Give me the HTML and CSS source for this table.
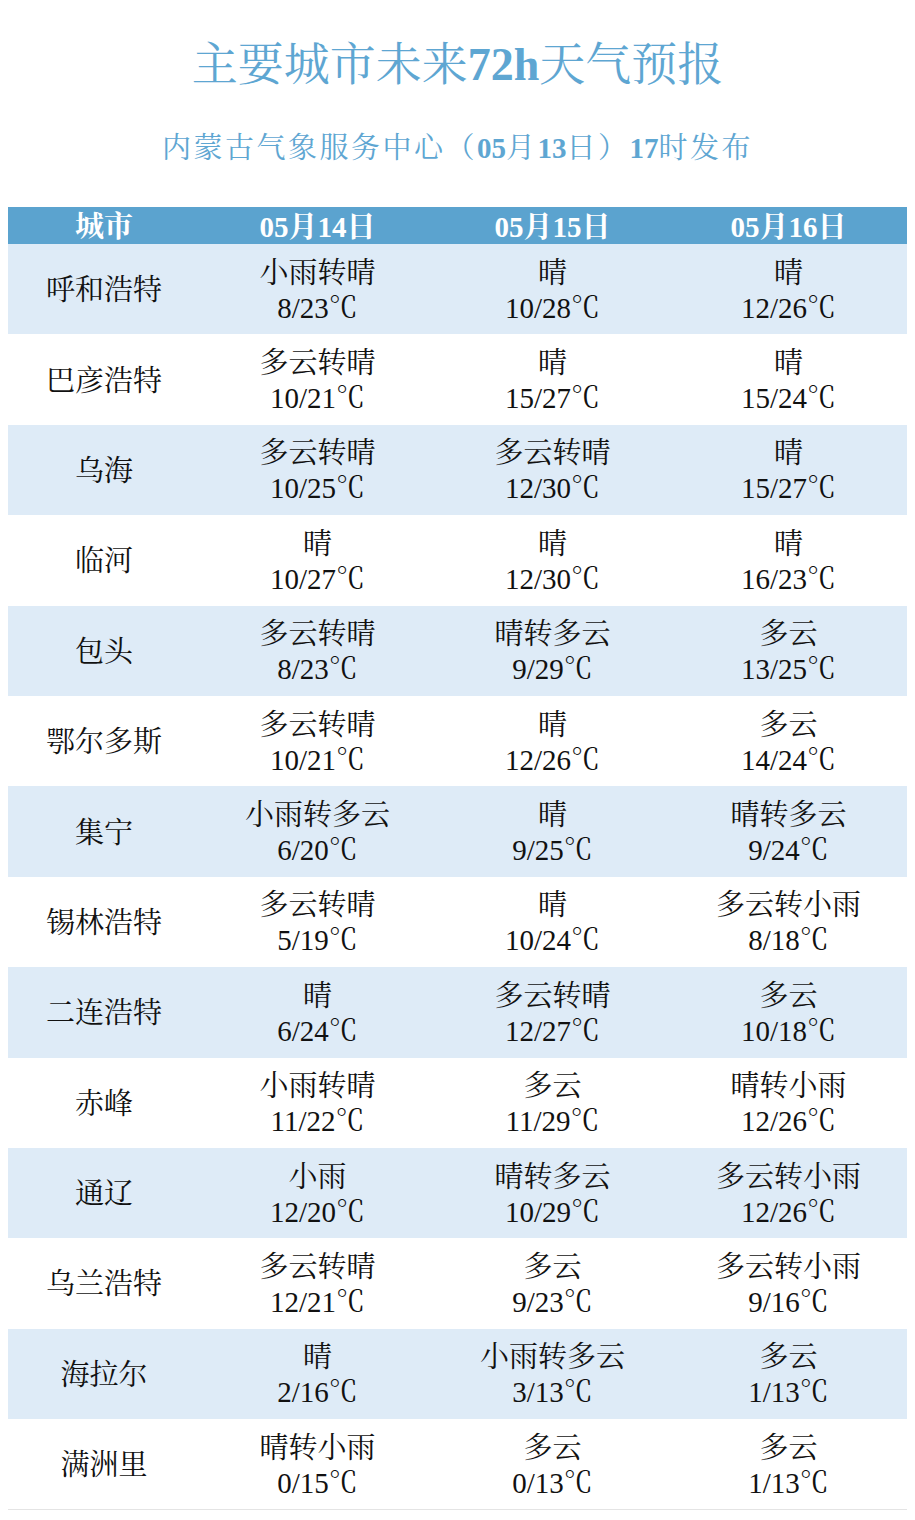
FILE: index.html
```html
<!DOCTYPE html>
<html lang="zh-CN">
<head>
<meta charset="utf-8">
<title>主要城市未来72h天气预报</title>
<link rel="stylesheet" href="styles.css">
</head>
<body>
<div class="page">
  <h1 class="title">主要城市未来<b>72h</b>天气预报</h1>
  <p class="subtitle">内蒙古气象服务中心（<b>05</b>月<b>13</b>日）<b>17</b>时发布</p>
  <div class="table">
    <div class="row head">
      <div class="cell">城市</div>
      <div class="cell">05月14日</div>
      <div class="cell">05月15日</div>
      <div class="cell">05月16日</div>
    </div>
    <div class="row alt">
      <div class="cell city">呼和浩特</div>
      <div class="cell"><span>小雨转晴</span><span>8/23℃</span></div>
      <div class="cell"><span>晴</span><span>10/28℃</span></div>
      <div class="cell"><span>晴</span><span>12/26℃</span></div>
    </div>
    <div class="row">
      <div class="cell city">巴彦浩特</div>
      <div class="cell"><span>多云转晴</span><span>10/21℃</span></div>
      <div class="cell"><span>晴</span><span>15/27℃</span></div>
      <div class="cell"><span>晴</span><span>15/24℃</span></div>
    </div>
    <div class="row alt">
      <div class="cell city">乌海</div>
      <div class="cell"><span>多云转晴</span><span>10/25℃</span></div>
      <div class="cell"><span>多云转晴</span><span>12/30℃</span></div>
      <div class="cell"><span>晴</span><span>15/27℃</span></div>
    </div>
    <div class="row">
      <div class="cell city">临河</div>
      <div class="cell"><span>晴</span><span>10/27℃</span></div>
      <div class="cell"><span>晴</span><span>12/30℃</span></div>
      <div class="cell"><span>晴</span><span>16/23℃</span></div>
    </div>
    <div class="row alt">
      <div class="cell city">包头</div>
      <div class="cell"><span>多云转晴</span><span>8/23℃</span></div>
      <div class="cell"><span>晴转多云</span><span>9/29℃</span></div>
      <div class="cell"><span>多云</span><span>13/25℃</span></div>
    </div>
    <div class="row">
      <div class="cell city">鄂尔多斯</div>
      <div class="cell"><span>多云转晴</span><span>10/21℃</span></div>
      <div class="cell"><span>晴</span><span>12/26℃</span></div>
      <div class="cell"><span>多云</span><span>14/24℃</span></div>
    </div>
    <div class="row alt">
      <div class="cell city">集宁</div>
      <div class="cell"><span>小雨转多云</span><span>6/20℃</span></div>
      <div class="cell"><span>晴</span><span>9/25℃</span></div>
      <div class="cell"><span>晴转多云</span><span>9/24℃</span></div>
    </div>
    <div class="row">
      <div class="cell city">锡林浩特</div>
      <div class="cell"><span>多云转晴</span><span>5/19℃</span></div>
      <div class="cell"><span>晴</span><span>10/24℃</span></div>
      <div class="cell"><span>多云转小雨</span><span>8/18℃</span></div>
    </div>
    <div class="row alt">
      <div class="cell city">二连浩特</div>
      <div class="cell"><span>晴</span><span>6/24℃</span></div>
      <div class="cell"><span>多云转晴</span><span>12/27℃</span></div>
      <div class="cell"><span>多云</span><span>10/18℃</span></div>
    </div>
    <div class="row">
      <div class="cell city">赤峰</div>
      <div class="cell"><span>小雨转晴</span><span>11/22℃</span></div>
      <div class="cell"><span>多云</span><span>11/29℃</span></div>
      <div class="cell"><span>晴转小雨</span><span>12/26℃</span></div>
    </div>
    <div class="row alt">
      <div class="cell city">通辽</div>
      <div class="cell"><span>小雨</span><span>12/20℃</span></div>
      <div class="cell"><span>晴转多云</span><span>10/29℃</span></div>
      <div class="cell"><span>多云转小雨</span><span>12/26℃</span></div>
    </div>
    <div class="row">
      <div class="cell city">乌兰浩特</div>
      <div class="cell"><span>多云转晴</span><span>12/21℃</span></div>
      <div class="cell"><span>多云</span><span>9/23℃</span></div>
      <div class="cell"><span>多云转小雨</span><span>9/16℃</span></div>
    </div>
    <div class="row alt">
      <div class="cell city">海拉尔</div>
      <div class="cell"><span>晴</span><span>2/16℃</span></div>
      <div class="cell"><span>小雨转多云</span><span>3/13℃</span></div>
      <div class="cell"><span>多云</span><span>1/13℃</span></div>
    </div>
    <div class="row last">
      <div class="cell city">满洲里</div>
      <div class="cell"><span>晴转小雨</span><span>0/15℃</span></div>
      <div class="cell"><span>多云</span><span>0/13℃</span></div>
      <div class="cell"><span>多云</span><span>1/13℃</span></div>
    </div>
  </div>
</div>
</body>
</html>
```
FILE: styles.css
```css
html, body {
  margin: 0;
  padding: 0;
  background: #ffffff;
}

.page {
  padding: 0 8px;
  font-family: "Liberation Serif", "Noto Serif CJK SC", "Noto Sans CJK SC", serif;
  color: #111111;
}

.title {
  margin: 0;
  padding-top: 40px;
  height: 50px;
  line-height: 50px;
  font-size: 46px;
  font-weight: normal;
  text-align: center;
  color: #5ea6d2;
}

.title b {
  font-weight: bold;
}

.subtitle {
  margin: 38px 0 0;
  height: 40px;
  line-height: 40px;
  font-size: 29px;
  font-weight: normal;
  text-align: center;
  color: #5ea6d2;
  letter-spacing: 2.5px;
}

.subtitle b {
  font-weight: bold;
  letter-spacing: 0;
}

.table {
  margin-top: 39px;
  display: flex;
  flex-direction: column;
}

.row {
  display: grid;
  grid-template-columns: 192px 235px 235px 237px;
  height: 90.4px;
  background: #ffffff;
}

.row.alt {
  background: #deebf7;
}

.row.last {
  border-bottom: 1px solid #e4e4e4;
}

.row.head {
  height: 37px;
  background: #5ba3cf;
  color: #ffffff;
  font-weight: bold;
  font-size: 29px;
}

.cell {
  display: flex;
  flex-direction: column;
  align-items: center;
  justify-content: center;
  text-align: center;
  font-size: 29px;
  line-height: 35px;
  padding-top: 3px;
}

.row.head .cell {
  line-height: 37px;
  padding-top: 2px;
}
```
